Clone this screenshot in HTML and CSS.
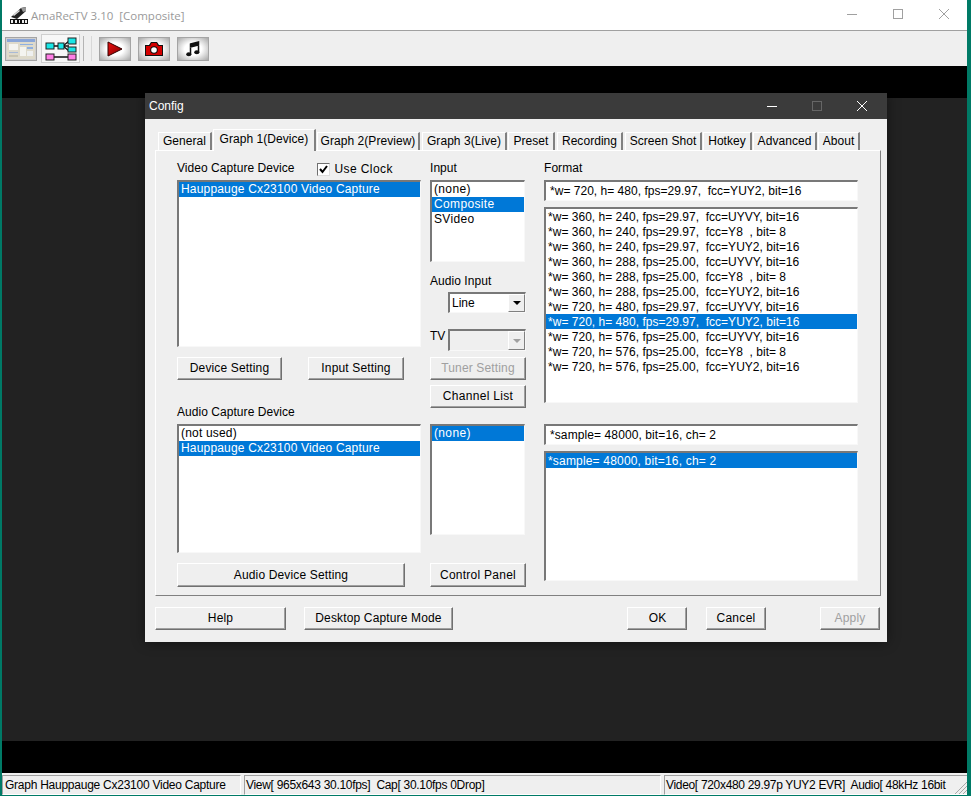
FILE: index.html
```html
<!DOCTYPE html>
<html lang="en">
<head>
<meta charset="utf-8">
<title>AmaRecTV 3.10 [Composite]</title>
<link rel="stylesheet" href="styles.css">
</head>
<body>
<div class="app">
  <header class="titlebar">
    <svg class="app-icon" width="18" height="18" viewBox="0 0 18 18"><path d="M1 11 L11 2 L16 1 L16 5 L7 13 Z" fill="#222"/><path d="M11 2 L16 1 L16 5 L13 6 Z" fill="#999"/><path d="M3 9 L9 4 L10 5 L4 10 Z" fill="#ddd"/><rect x="0" y="13" width="18" height="5" fill="#111"/><path d="M1 14h2v3H1zM5 14h2v3H5zM9 14h1v3H9zM12 14h2v3h-2zM15 14h2v3h-2z" fill="#eee"/></svg>
    <span class="app-title">AmaRecTV 3.10&nbsp; [Composite]</span>
    <div class="caption-btns">
      <svg width="12" height="12" viewBox="0 0 12 12"><path d="M1 6.5H11" stroke="#a0a0a0" fill="none"/></svg>
      <svg width="12" height="12" viewBox="0 0 12 12"><rect x="1.500" y="1.500" width="9" height="9" stroke="#a0a0a0" fill="none"/></svg>
      <svg width="12" height="12" viewBox="0 0 12 12"><path d="M1 1L11 11M11 1L1 11" stroke="#a0a0a0" fill="none"/></svg>
    </div>
  </header>
  <nav class="toolbar">
    <button class="tool tool-thumb"><svg width="28" height="20" viewBox="0 0 28 20"><rect width="28" height="20" fill="#dedacb"/><rect x="0" y="0" width="28" height="3" fill="#8aa6d8"/><rect x="2" y="5" width="9" height="6" fill="#f4f4f0"/><rect x="13" y="5" width="13" height="1" fill="#8fb0e0"/><rect x="13" y="8" width="6" height="9" fill="#f4f4f0"/><rect x="20" y="8" width="6" height="2" fill="#8fb0e0"/><rect x="20" y="12" width="6" height="5" fill="#eef0f0"/><rect x="2" y="13" width="9" height="1" fill="#a9bad6"/><rect x="2" y="16" width="9" height="2" fill="#c8c4b2"/></svg></button>
    <button class="tool tool-active"><svg width="32" height="24" viewBox="0 0 32 24"><path d="M8 9H24M8 20H24M18 9L24 4M18 9L24 14" stroke="#111" stroke-width="1.300" fill="none"/><rect x="1" y="6" width="8" height="6" fill="#19e6e6" stroke="#222"/><rect x="13" y="6" width="6" height="6" fill="#19e6e6" stroke="#222"/><rect x="23" y="1" width="8" height="6" fill="#19e6e6" stroke="#222"/><rect x="23" y="10" width="8" height="5" fill="#19e6e6" stroke="#222"/><rect x="1" y="17" width="8" height="6" fill="#ff7fe6" stroke="#222"/><rect x="23" y="17" width="8" height="6" fill="#ff7fe6" stroke="#222"/></svg></button>
    <span class="tool-sep"></span>
    <button class="tool tool-grad"><svg width="16" height="16" viewBox="0 0 16 16"><defs><linearGradient id="playred" x1="0" x2="1" y1="0" y2="1"><stop offset="0" stop-color="#f01010"/><stop offset="1" stop-color="#800000"/></linearGradient></defs><path d="M1 1L15 8L1 15Z" fill="url(#playred)" stroke="#300" stroke-width="1"/></svg></button>
    <button class="tool tool-grad"><svg width="18" height="14" viewBox="0 0 18 14"><path d="M0 3H4L6 0H12L14 3H18V14H0Z" fill="#111"/><path d="M1 4H5L6.500 1H11.500L13 4H17V13H1Z" fill="#d40000"/><circle cx="9" cy="8" r="3.800" fill="#111"/><circle cx="9" cy="8" r="2.800" fill="#fff"/></svg></button>
    <button class="tool tool-grad"><svg width="14" height="16" viewBox="0 0 14 16"><path d="M4.500 3V13M12.500 1V11M4.500 3L12.500 1V4L4.500 6Z" stroke="#111" stroke-width="1.500" fill="#111"/><ellipse cx="2.800" cy="13.300" rx="2.600" ry="2" fill="#111"/><ellipse cx="10.800" cy="11.300" rx="2.600" ry="2" fill="#111"/></svg></button>
  </nav>
  <div class="band"></div>
  <main class="video"></main>
  <div class="band"></div>
  <footer class="statusbar">
    <div class="status s1">Graph Hauppauge Cx23100 Video Capture</div>
    <div class="status s2">View[ 965x643 30.10fps]&nbsp; Cap[ 30.10fps 0Drop]</div>
    <div class="status s3">Video[ 720x480 29.97p YUY2 EVR]&nbsp; Audio[ 48kHz 16bit<svg class="grip" width="13" height="13" viewBox="0 0 13 13"><path d="M13 1L1 13M13 5L5 13M13 9L9 13" stroke="#a8a8a8" fill="none"/></svg></div>
  </footer>

  <section class="dialog">
    <div class="dlg-title">
      <span>Config</span>
      <div class="dlg-caption">
        <svg width="12" height="12" viewBox="0 0 12 12"><path d="M1 6.500H11" stroke="#fff" fill="none"/></svg>
        <svg width="12" height="12" viewBox="0 0 12 12"><rect x="1.500" y="1.500" width="9" height="9" stroke="#666" fill="none"/></svg>
        <svg width="12" height="12" viewBox="0 0 12 12"><path d="M1 1L11 11M11 1L1 11" stroke="#fff" fill="none"/></svg>
      </div>
    </div>
    <div class="tabs">
      <div class="tab t-general">General</div>
      <div class="tab t-g1 selected">Graph 1(Device)</div>
      <div class="tab t-g2">Graph 2(Preview)</div>
      <div class="tab t-g3">Graph 3(Live)</div>
      <div class="tab t-preset">Preset</div>
      <div class="tab t-rec">Recording</div>
      <div class="tab t-shot">Screen Shot</div>
      <div class="tab t-hot">Hotkey</div>
      <div class="tab t-adv">Advanced</div>
      <div class="tab t-about">About</div>
    </div>
    <div class="panel">
      <div class="col col1">
        <div class="label-row">
          <span>Video Capture Device</span>
          <label class="check"><span class="box"><svg width="9" height="9" viewBox="0 0 9 9"><path d="M1 4L3.500 7L8 1" stroke="#000" stroke-width="2" fill="none"/></svg></span>Use Clock</label>
        </div>
        <div class="list h-video"><div class="row sel">Hauppauge Cx23100 Video Capture</div></div>
        <div class="btn-row">
          <button class="btn b-device">Device Setting</button>
          <button class="btn b-input">Input Setting</button>
        </div>
        <div class="label lbl-audio">Audio Capture Device</div>
        <div class="list h-audio">
          <div class="row">(not used)</div>
          <div class="row sel">Hauppauge Cx23100 Video Capture</div>
        </div>
        <button class="btn b-audio">Audio Device Setting</button>
      </div>
      <div class="col col2">
        <div class="label">Input</div>
        <div class="list h-input">
          <div class="row">(none)</div>
          <div class="row sel">Composite</div>
          <div class="row">SVideo</div>
        </div>
        <div class="label lbl-ainput">Audio Input</div>
        <div class="combo c-line"><span class="combo-val">Line</span><span class="combo-arrow"><i></i></span></div>
        <div class="tv-row">
          <span>TV</span>
          <div class="combo disabled"><span class="combo-val"></span><span class="combo-arrow"><i></i></span></div>
        </div>
        <button class="btn b-tuner" disabled>Tuner Setting</button>
        <button class="btn b-channel">Channel List</button>
        <div class="list h-ain"><div class="row sel">(none)</div></div>
        <button class="btn b-control">Control Panel</button>
      </div>
      <div class="col col3">
        <div class="label">Format</div>
        <div class="edit">*w= 720, h= 480, fps=29.97,  fcc=YUY2, bit=16</div>
        <div class="list h-format">
          <div class="row">*w= 360, h= 240, fps=29.97,  fcc=UYVY, bit=16</div>
          <div class="row">*w= 360, h= 240, fps=29.97,  fcc=Y8  , bit= 8</div>
          <div class="row">*w= 360, h= 240, fps=29.97,  fcc=YUY2, bit=16</div>
          <div class="row">*w= 360, h= 288, fps=25.00,  fcc=UYVY, bit=16</div>
          <div class="row">*w= 360, h= 288, fps=25.00,  fcc=Y8  , bit= 8</div>
          <div class="row">*w= 360, h= 288, fps=25.00,  fcc=YUY2, bit=16</div>
          <div class="row">*w= 720, h= 480, fps=29.97,  fcc=UYVY, bit=16</div>
          <div class="row sel">*w= 720, h= 480, fps=29.97,  fcc=YUY2, bit=16</div>
          <div class="row">*w= 720, h= 576, fps=25.00,  fcc=UYVY, bit=16</div>
          <div class="row">*w= 720, h= 576, fps=25.00,  fcc=Y8  , bit= 8</div>
          <div class="row">*w= 720, h= 576, fps=25.00,  fcc=YUY2, bit=16</div>
        </div>
        <div class="edit e-sample">*sample= 48000, bit=16, ch= 2</div>
        <div class="list h-sample"><div class="row sel">*sample= 48000, bit=16, ch= 2</div></div>
      </div>
    </div>
    <div class="dlg-footer">
      <button class="btn f-help">Help</button>
      <button class="btn f-desktop">Desktop Capture Mode</button>
      <button class="btn f-ok">OK</button>
      <button class="btn f-cancel">Cancel</button>
      <button class="btn f-apply" disabled>Apply</button>
    </div>
  </section>
</div>
</body>
</html>
```
FILE: styles.css
```css
* { box-sizing: border-box; }
html, body { margin: 0; height: 100%; overflow: hidden; }
body {
  background: #007a66;
  font-family: "Liberation Sans", Arial, sans-serif;
  font-size: 12px;
  color: #000;
}
button { font: inherit; color: inherit; padding: 0; margin: 0; }

.app {
  position: relative;
  width: 965px;
  height: 795px;
  margin-left: 2px;
  display: flex;
  flex-direction: column;
  background: #000;
}

/* main window title bar */
.titlebar {
  height: 31px;
  flex: none;
  background: #fff;
  border-bottom: 1px solid #a0a0a0;
  display: flex;
  align-items: center;
  padding-left: 8px;
}
.app-icon { margin-right: 3px; }
.app-title { color: #9a9a9a; font-family: "Open Sans", sans-serif; font-size: 11.5px; }
.caption-btns {
  margin-left: auto;
  display: flex;
  gap: 34px;
  padding: 0 17px 2px 0;
}

/* toolbar */
.toolbar {
  height: 35px;
  flex: none;
  background: #efefef;
  display: flex;
  align-items: center;
  padding-left: 3px;
}
.tool {
  width: 32px;
  height: 24px;
  border: 1px solid #a4a4a4;
  background: #efefef;
  display: flex;
  align-items: center;
  justify-content: center;
}
.tool + .tool { margin-left: 7px; }
.tool-thumb { box-shadow: inset 0 0 0 1px #d0d0d0; }
.tool-active {
  width: 39px;
  height: 29px;
  margin-left: 4px !important;
  background: #f7f7f7;
  border-color: #cfcfcf;
}
.tool-grad { background: radial-gradient(ellipse at center, #fff 40%, #a8a8a8 100%); }
.tool-sep {
  width: 9px;
  height: 25px;
  margin: 0 7px 0 3px;
  border-left: 1px solid #b4b4b4;
  border-right: 1px solid #d8d8d8;
}

.band { height: 32px; flex: none; background: #000; }
.video { height: 643px; flex: none; background: #222; }

/* status bar */
.statusbar {
  height: 22px;
  flex: none;
  background: #efefef;
  padding-top: 2px;
  display: flex;
  gap: 3px;
}
.status {
  border: 1px solid;
  border-color: #a0a0a0 #fff #fff #a0a0a0;
  padding: 2px 0 0 2px;
  position: relative;
  white-space: pre;
  line-height: 15px;
}
.s1 { width: 239px; letter-spacing: -.25px; }
.s2 { width: 417px; letter-spacing: -.3px; padding-left: 1px; }
.s3 { width: 303px; letter-spacing: -.32px; padding-left: 1px; border-right: 0; }
.grip { position: absolute; right: 0; bottom: 0; }

/* dialog */
.dialog {
  position: absolute;
  left: 143px;
  top: 93px;
  width: 742px;
  height: 549px;
  background: #efefef;
  box-shadow: 0 0 12px rgba(0, 0, 0, .45);
  display: flex;
  flex-direction: column;
}
.dlg-title {
  height: 26px;
  flex: none;
  background: #3b3b3b;
  color: #fff;
  display: flex;
  align-items: center;
  padding-left: 4px;
}
.dlg-caption {
  margin-left: auto;
  display: flex;
  gap: 33px;
  padding-right: 19px;
}

/* tabs */
.tabs {
  height: 31px;
  flex: none;
  display: flex;
  align-items: flex-end;
  padding-left: 13px;
  position: relative;
  z-index: 1;
}
.tab {
  height: 18px;
  margin-right: 1px;
  text-align: center;
  line-height: 16px;
  background: #efefef;
  border-top: 1px solid #fff;
  border-left: 1px solid #fff;
  border-right: 2px solid #808080;
  white-space: nowrap;
  letter-spacing: .05px;
}
.tab.selected {
  height: 22px;
  margin-bottom: -1px;
  padding-top: 1px;
}
.t-general { width: 54px; }
.t-g1 { width: 103px; }
.t-g2 { width: 103px; margin-right: 2px; }
.t-g3 { width: 85px; }
.t-preset { width: 47px; margin-right: 2px; }
.t-rec { width: 66px; margin-right: 2px; }
.t-shot { width: 77px; }
.t-hot { width: 49px; }
.t-adv { width: 64px; }
.t-about { width: 42px; }

/* panel */
.panel {
  width: 726px;
  height: 446px;
  margin-left: 10px;
  flex: none;
  border: 1px solid;
  border-color: #fff #808080 #808080 #fff;
  padding: 10px 0 0 21px;
  display: flex;
}
.col { display: flex; flex-direction: column; align-items: flex-start; }
.col1 { width: 244px; margin-right: 9px; }
.col2 { width: 96px; margin-right: 18px; }
.col3 { width: 314px; }

.label, .label-row { height: 19px; line-height: 15px; flex: none; letter-spacing: .05px; }
.label-row { display: flex; width: 100%; }
.check { display: flex; margin-left: 22px; line-height: 16px; letter-spacing: .4px; }
.box {
  width: 13px;
  height: 13px;
  margin: 2px 5px 0 0;
  background: #fff;
  border: 1px solid;
  border-color: #707070 #ddd #ddd #707070;
  display: flex;
  align-items: center;
  justify-content: center;
}

.list, .edit, .combo {
  flex: none;
  border: 2px solid;
  border-color: #787878 #f8f8f8 #f8f8f8 #787878;
  border-right-width: 1px;
  border-bottom-width: 1px;
}
.list {
  width: 100%;
  background: #fff;
  overflow: hidden;
  letter-spacing: .18px;
}
.row {
  height: 15px;
  line-height: 15px;
  padding-left: 2px;
  white-space: pre;
}
.row.sel { background: #0078d7; color: #fff; }
.h-video { height: 167px; }
.h-audio { height: 129px; }
.h-input { height: 82px; width: 95px; letter-spacing: .35px; }
.h-ain { height: 111px; width: 95px; margin-top: 16px; letter-spacing: .35px; }
.h-format { height: 196px; margin-top: 6px; letter-spacing: .02px; }
.h-sample { height: 130px; margin-top: 6px; }
.h-format .row, .h-sample .row { line-height: 16px; }

.edit {
  width: 100%;
  height: 21px;
  line-height: 18px;
  padding-left: 4px;
  background: #fff;
  white-space: pre;
  letter-spacing: .02px;
}
.e-sample { margin-top: 21px; letter-spacing: .1px; }

/* buttons */
.btn {
  flex: none;
  height: 23px;
  padding-bottom: 2px;
  background: #efefef;
  border: 1px solid;
  border-color: #fff #707070 #707070 #fff;
  box-shadow: inset -1px -1px 0 #a0a0a0;
  text-align: center;
  letter-spacing: .15px;
}
.btn:disabled { color: #a0a0a0; }
.btn-row { display: flex; gap: 26px; margin-top: 10px; }
.b-device { width: 105px; }
.b-input { width: 96px; }
.lbl-audio { margin-top: 25px; }
.b-audio { width: 228px; height: 24px; margin-top: 10px; padding-bottom: 0; }
.lbl-ainput { margin-top: 12px; height: 18px; }
.b-tuner { width: 96px; margin-top: 6px; }
.b-channel { width: 96px; margin-top: 5px; letter-spacing: .3px; }
.b-control { width: 96px; height: 24px; margin-top: 28px; padding-bottom: 0; letter-spacing: .25px; }

/* combos */
.combo {
  width: 78px;
  height: 21px;
  display: flex;
  background: #fff;
}
.combo-val { flex: 1; padding-left: 2px; line-height: 19px; }
.combo-arrow {
  width: 17px;
  background: #efefef;
  border: 1px solid;
  border-color: #fff #808080 #808080 #fff;
  display: flex;
  align-items: center;
  justify-content: center;
}
.combo-arrow i {
  width: 0;
  height: 0;
  border-style: solid;
  border-width: 4px 4px 0;
  border-color: #000 transparent transparent;
}
.combo.disabled { background: #efefef; }
.combo.disabled .combo-arrow i { border-top-color: #a0a0a0; }
.c-line { margin: 0 0 0 18px; }
.tv-row { display: flex; justify-content: space-between; width: 96px; height: 22px; margin-top: 16px; line-height: 15px; }
.tv-row .combo { height: 22px; }

/* footer */
.dlg-footer {
  display: flex;
  padding: 11px 0 0 10px;
}
.f-help { width: 131px; }
.f-desktop { width: 149px; margin-left: 18px; }
.f-ok { width: 60px; margin-left: 174px; padding-left: 1px; }
.f-cancel { width: 60px; margin-left: 19px; letter-spacing: .3px; }
.f-apply { width: 60px; margin-left: 54px; }
```
